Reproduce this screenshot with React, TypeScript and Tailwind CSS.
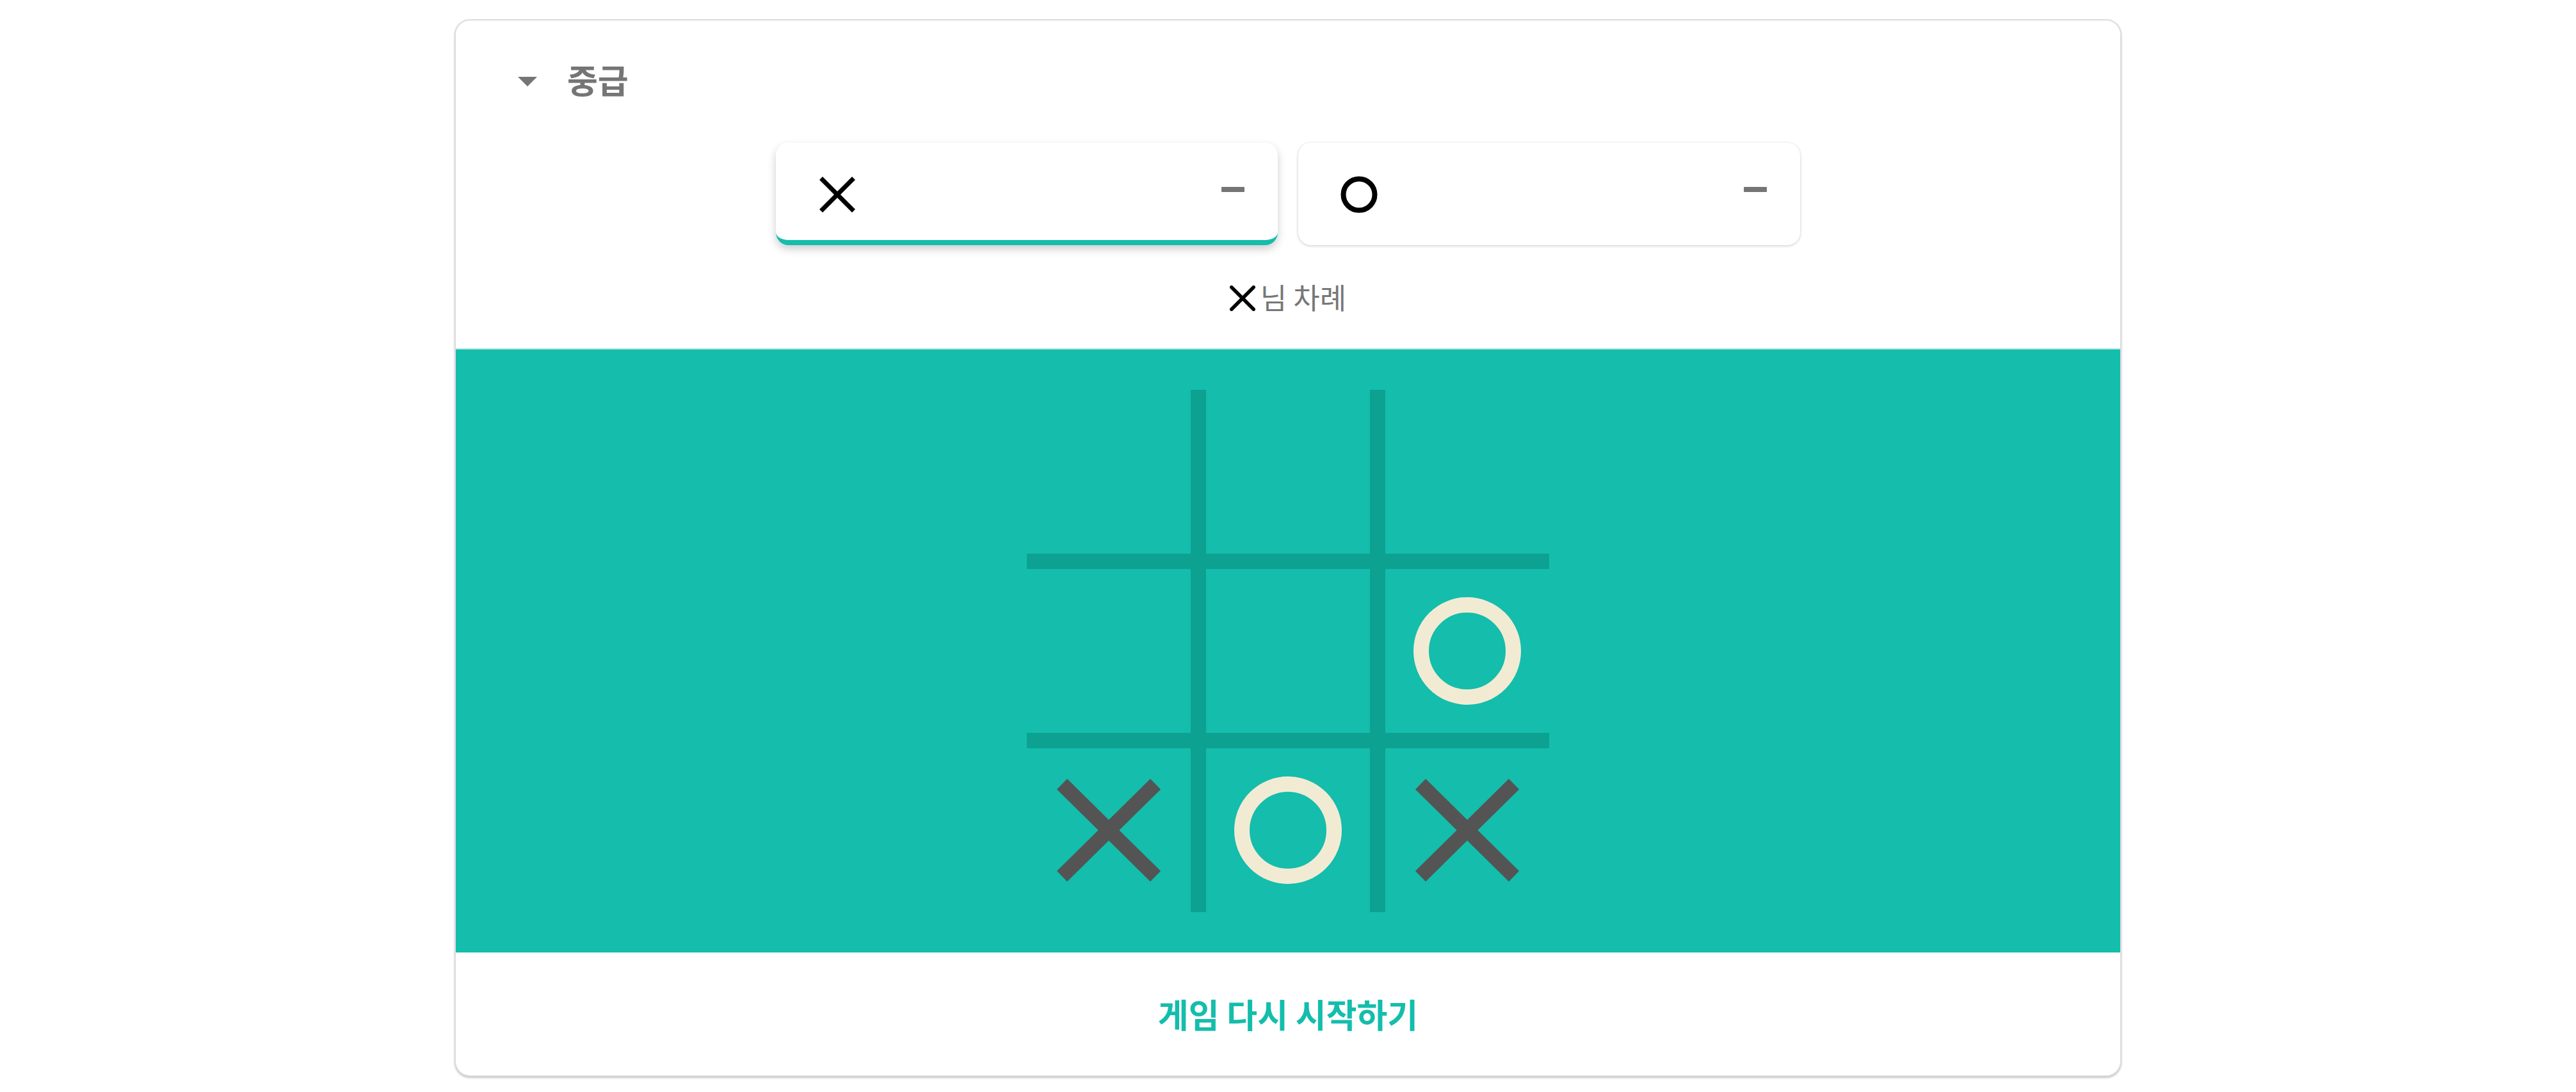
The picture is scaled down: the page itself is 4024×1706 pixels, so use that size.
import React from "react";

function BigX() {
  return (
    <svg width="256" height="256" viewBox="0 0 256 256">
      <line x1="55" y1="56" x2="201" y2="200" stroke="#545454" strokeWidth="23" strokeLinecap="butt" />
      <line x1="201" y1="56" x2="55" y2="200" stroke="#545454" strokeWidth="23" strokeLinecap="butt" />
    </svg>
  );
}

function BigO() {
  return (
    <svg width="256" height="256" viewBox="0 0 256 256">
      <circle cx="128" cy="128" r="72" fill="none" stroke="#f2ebd3" strokeWidth="24" />
    </svg>
  );
}

function SmallX({ size, stroke, round }: { size: number; stroke: number; round?: boolean }) {
  const p = round ? stroke / 2 : stroke * 0.36;
  return (
    <svg width={size} height={size} viewBox={`0 0 ${size} ${size}`}>
      <line x1={p} y1={p} x2={size - p} y2={size - p} stroke="#000" strokeWidth={stroke} strokeLinecap={round ? "round" : "butt"} />
      <line x1={size - p} y1={p} x2={p} y2={size - p} stroke="#000" strokeWidth={stroke} strokeLinecap={round ? "round" : "butt"} />
    </svg>
  );
}

function SmallO() {
  return (
    <svg width="58" height="58" viewBox="0 0 58 58">
      <circle cx="29" cy="29" r="24.5" fill="none" stroke="#000" strokeWidth="8" />
    </svg>
  );
}

export default function App() {
  const board: string[][] = [
    ["", "", ""],
    ["", "", "O"],
    ["X", "O", "X"],
  ];
  return (
    <div className="w-full min-h-screen bg-white pt-[30px] font-['Noto_Sans_CJK_KR','Noto_Sans',sans-serif]">
      <div className="mx-auto w-[2604px] h-[1652px] border-2 border-[#dadce0] rounded-[24px] overflow-hidden bg-white shadow-[0_2px_3px_rgba(60,64,67,0.3)] flex flex-col">
        {/* Header */}
        <div className="h-[184px] shrink-0 flex items-center pl-[97px]">
          <svg width="30" height="15" viewBox="0 0 30 15" className="mt-[6px]">
            <polygon points="0,0 30,0 15,15" fill="#757575" />
          </svg>
          <span className="ml-[47px] text-[52px] leading-none font-bold text-[#757575]">중급</span>
        </div>

        {/* Players */}
        <div className="mt-[7px] h-[160px] shrink-0 flex justify-center gap-[32px]">
          <div className="w-[784px] h-[160px] rounded-[20px] bg-white border-b-[8px] border-[#14bdac] shadow-[0_6px_14px_rgba(0,0,0,0.2)] flex items-center justify-between pl-[68px] pr-[52px]">
            <div className="mt-[10px]">
              <SmallX size={56} stroke={7} />
            </div>
            <div className="mb-[6px] w-[36px] h-[8px] rounded-[1px] bg-[#757575]" />
          </div>
          <div className="w-[784px] h-[160px] rounded-[20px] bg-white shadow-[0_1px_4px_rgba(0,0,0,0.22)] flex items-center justify-between pl-[66px] pr-[52px]">
            <div className="mt-[2px]">
              <SmallO />
            </div>
            <div className="mb-[14px] w-[36px] h-[8px] rounded-[1px] bg-[#757575]" />
          </div>
        </div>

        {/* Turn indicator */}
        <div className="h-[161px] shrink-0 flex items-center justify-center">
          <div className="mt-[4px]">
            <SmallX size={40} stroke={5.5} round />
          </div>
          <span className="ml-[8px] text-[45px] leading-none text-[#777777]">님 차례</span>
        </div>

        {/* Board */}
        <div className="h-[944px] shrink-0 bg-[#14bdac] border-t-2 border-[#b5e8e2] flex items-center justify-center">
          <div className="grid grid-cols-3 grid-rows-3 gap-[24px] bg-[#0da192] w-[816px] h-[816px]">
            {board.flat().map((v, i) => (
              <div key={i} className="bg-[#14bdac] flex items-center justify-center overflow-hidden">
                {v === "X" ? <BigX /> : v === "O" ? <BigO /> : null}
              </div>
            ))}
          </div>
        </div>

        {/* Footer */}
        <div className="flex-1 flex items-center justify-center">
          <span className="text-[52px] leading-none font-bold text-[#14bdac]">게임 다시 시작하기</span>
        </div>
      </div>
    </div>
  );
}
